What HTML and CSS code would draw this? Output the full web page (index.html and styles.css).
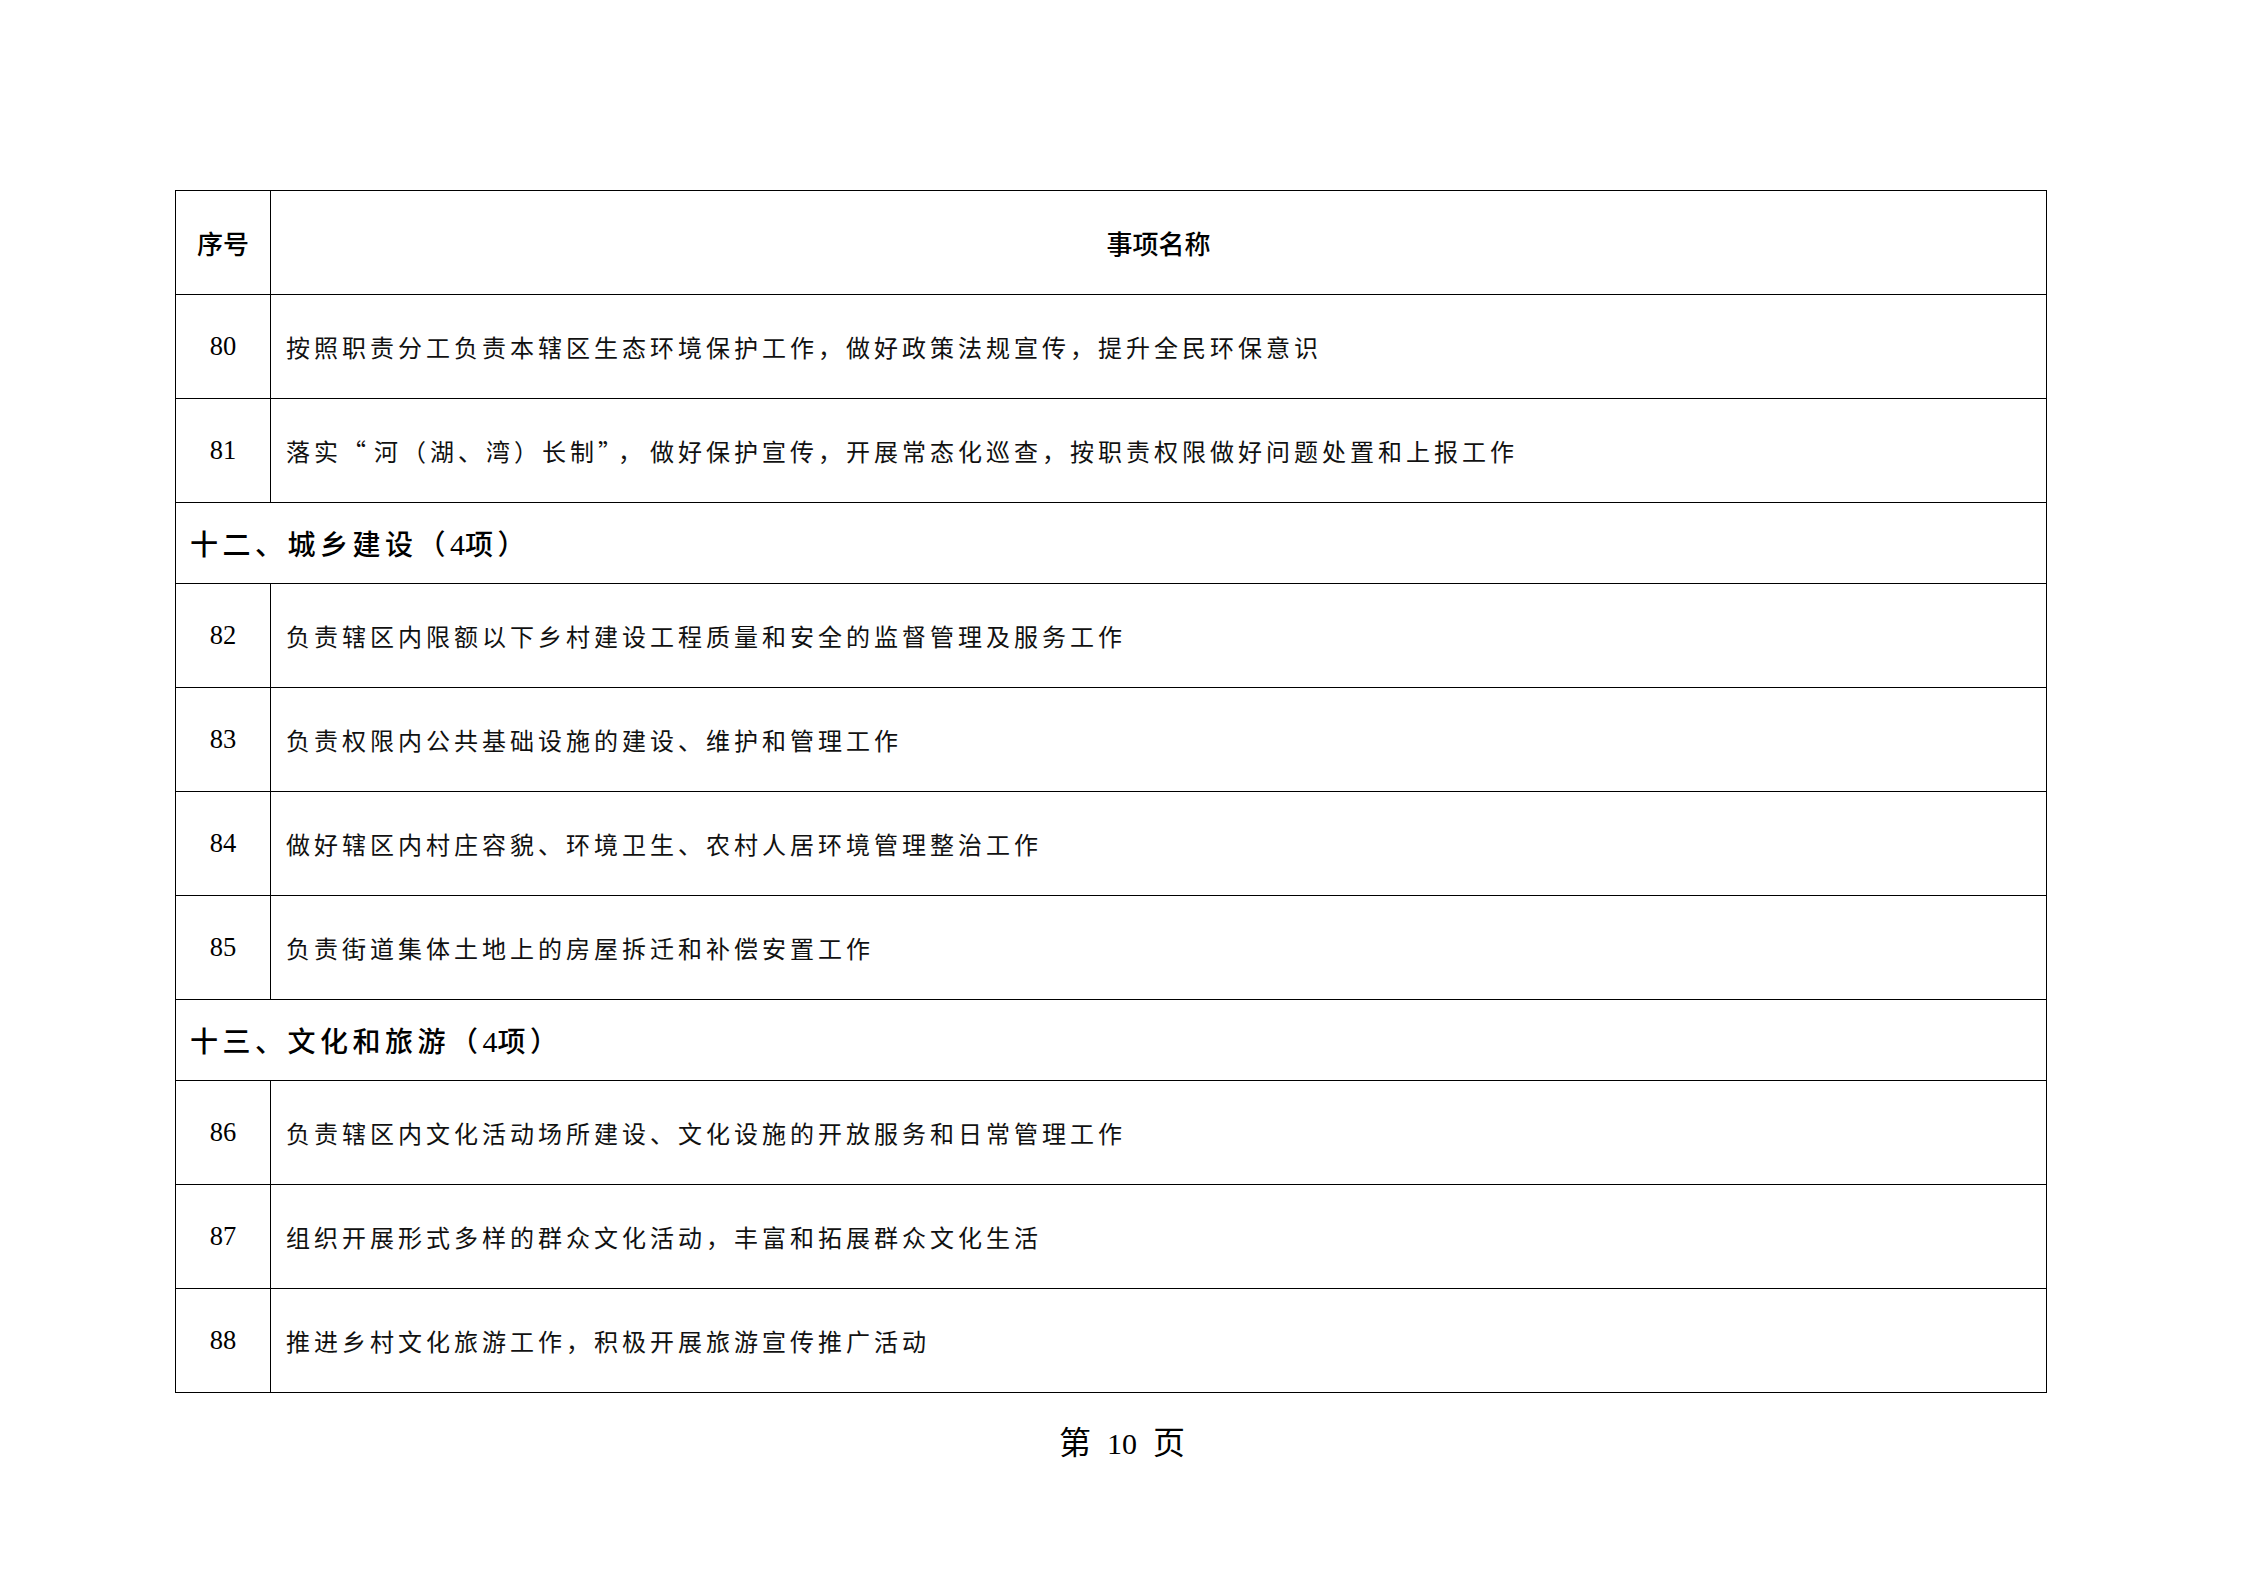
FILE: index.html
```html
<!DOCTYPE html>
<html lang="zh-CN">
<head>
<meta charset="utf-8">
<title>第10页</title>
<link rel="stylesheet" href="styles.css">
</head>
<body>
<div class="page">
  <table class="list">
    <colgroup><col class="c-no"><col class="c-name"></colgroup>
    <tr class="row head">
      <th class="no">序号</th>
      <th class="name-h">事项名称</th>
    </tr>
    <tr class="row">
      <td class="no">80</td>
      <td class="name">按照职责分工负责本辖区生态环境保护工作，做好政策法规宣传，提升全民环保意识</td>
    </tr>
    <tr class="row">
      <td class="no">81</td>
      <td class="name">落实<span class="wide">“</span>河（湖、湾）长制<span class="wide">”，</span>做好保护宣传，开展常态化巡查，按职责权限做好问题处置和上报工作</td>
    </tr>
    <tr class="sec">
      <td colspan="2" class="sec-t">十二、城乡建设（<span class="d">4</span>项）</td>
    </tr>
    <tr class="row">
      <td class="no">82</td>
      <td class="name">负责辖区内限额以下乡村建设工程质量和安全的监督管理及服务工作</td>
    </tr>
    <tr class="row">
      <td class="no">83</td>
      <td class="name">负责权限内公共基础设施的建设、维护和管理工作</td>
    </tr>
    <tr class="row">
      <td class="no">84</td>
      <td class="name">做好辖区内村庄容貌、环境卫生、农村人居环境管理整治工作</td>
    </tr>
    <tr class="row">
      <td class="no">85</td>
      <td class="name">负责街道集体土地上的房屋拆迁和补偿安置工作</td>
    </tr>
    <tr class="sec">
      <td colspan="2" class="sec-t">十三、文化和旅游（<span class="d">4</span>项）</td>
    </tr>
    <tr class="row">
      <td class="no">86</td>
      <td class="name">负责辖区内文化活动场所建设、文化设施的开放服务和日常管理工作</td>
    </tr>
    <tr class="row">
      <td class="no">87</td>
      <td class="name">组织开展形式多样的群众文化活动，丰富和拓展群众文化生活</td>
    </tr>
    <tr class="row">
      <td class="no">88</td>
      <td class="name">推进乡村文化旅游工作，积极开展旅游宣传推广活动</td>
    </tr>
  </table>
  <div class="footer">第<span class="pn">10</span>页</div>
</div>
</body>
</html>
```

FILE: styles.css
```css
html, body {
  margin: 0;
  padding: 0;
  background: #fff;
}
.page {
  width: 2244px;
  height: 1587px;
  padding-top: 190px;
  box-sizing: border-box;
  font-family: "Noto Sans CJK SC", "Noto Sans", sans-serif;
  color: #000;
}
.list {
  margin-left: 175px;
  width: 1872px;
  border-collapse: collapse;
  table-layout: fixed;
}
.c-no { width: 95px; }
.list th, .list td {
  border: 1.5px solid #000;
  padding: 0;
  vertical-align: middle;
}
.row { height: 104px; }
.sec { height: 81px; }
.head th {
  font-size: 26px;
  font-weight: 500;
  text-align: center;
  color: #000;
}
.no {
  text-align: center;
  font-family: "Liberation Serif", serif;
  font-size: 26.5px;
  color: #000;
}
.head .no {
  font-family: "Noto Sans CJK SC", sans-serif;
  font-size: 26px;
}
.name {
  font-size: 24px;
  letter-spacing: 4px;
  padding-left: 15px !important;
  color: #111;
  white-space: nowrap;
}
.wide {
  letter-spacing: 8px;
}
.sec-t {
  font-size: 28px;
  font-weight: 500;
  letter-spacing: 4.5px;
  padding-left: 14px !important;
  color: #000;
  white-space: nowrap;
}
.d {
  font-family: "Liberation Serif", serif;
  font-size: 30px;
  font-weight: 400;
  letter-spacing: 0;
}
.footer {
  margin-top: 29px;
  text-align: center;
  font-size: 32px;
  line-height: 36px;
}
.pn {
  font-family: "Liberation Serif", serif;
  font-size: 30px;
  margin: 0 16px;
}
```
